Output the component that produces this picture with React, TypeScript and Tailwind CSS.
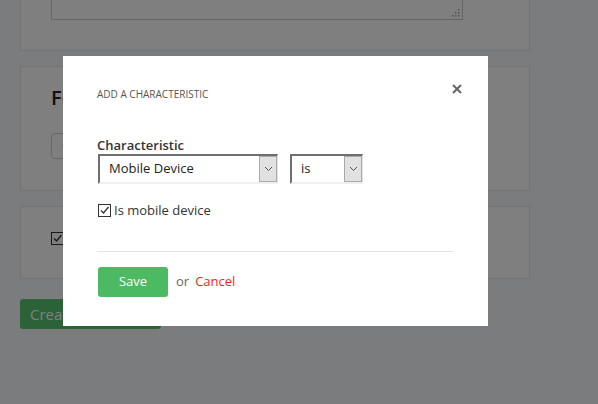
import React from "react"

function ClassicSelect({ value, width }: { value: string; width: string }) {
  return (
    <div
      className={`flex h-[30px] ${width} items-stretch border-t-2 border-l-2 border-r border-b-2 border-t-[#6f6f6f] border-l-[#6f6f6f] border-r-[#e3e3e3] border-b-[#f0f0f0] bg-white`}
    >
      <span className="flex flex-1 items-center pl-[9px] text-[13px] text-[#222]">{value}</span>
      <span className="flex w-[18px] items-center justify-center border border-[#a9a9a9] bg-[#e1e1e1]">
        <svg width="9" height="6" viewBox="0 0 9 6" fill="none">
          <path d="M1 1l3.5 3.5L8 1" stroke="#555" strokeWidth="1" />
        </svg>
      </span>
    </div>
  )
}

function CheckBox() {
  return (
    <span className="flex h-[13px] w-[13px] shrink-0 items-center justify-center border border-[#333] bg-white">
      <svg width="11" height="11" viewBox="0 0 11 11" fill="none">
        <path d="M2 5.5l2.5 2.5L9.5 2" stroke="#333" strokeWidth="1.3" />
      </svg>
    </span>
  )
}

export default function App() {
  return (
    <div
      className="relative h-[404px] w-[598px] overflow-hidden bg-[#f7f9fb]"
      style={{ fontFamily: '"Open Sans", "Liberation Sans", sans-serif' }}
    >
      {/* page behind the dialog */}
      <div className="flex flex-col gap-[15px] px-[20px]">
        <div className="mt-[-61px] w-[510px] border border-[#e6e6e6] bg-white px-[30px] pb-[30px] pt-[20px]">
          <div className="relative h-[60px] w-[412px] border border-[#ccc] bg-white">
            <svg className="absolute bottom-[2px] right-[2px]" width="8" height="8" viewBox="0 0 8 8">
              <rect x="6" y="0" width="1.5" height="1.5" fill="#aaa" />
              <rect x="3" y="3" width="1.5" height="1.5" fill="#aaa" />
              <rect x="6" y="3" width="1.5" height="1.5" fill="#aaa" />
              <rect x="0" y="6" width="1.5" height="1.5" fill="#aaa" />
              <rect x="3" y="6" width="1.5" height="1.5" fill="#aaa" />
              <rect x="6" y="6" width="1.5" height="1.5" fill="#aaa" />
            </svg>
          </div>
        </div>

        <div className="h-[125px] w-[510px] border border-[#e6e6e6] bg-white px-[30px] pt-[18px]">
          <h2 className="text-[20px] font-semibold leading-[26px] text-[#222]">Fonts</h2>
          <div className="mt-[22px] flex h-[26px] w-[120px] items-center rounded border border-[#ccc] bg-white px-[10px] text-[13px] text-[#e67e22]">
            + Add
          </div>
        </div>

        <div className="flex h-[73px] w-[510px] items-start border border-[#e6e6e6] bg-white px-[30px] pt-[25px]">
          <CheckBox />
          <span className="ml-[4px] text-[13px] leading-[14px] text-[#333]">On</span>
        </div>

        <button className="mt-[5px] h-[30px] w-[141px] rounded-[3px] bg-[#58c46e] pl-[10px] text-left text-[15px] text-white">
          Create Segment
        </button>
      </div>

      {/* overlay */}
      <div className="absolute inset-0 bg-black/50" />

      {/* dialog */}
      <div className="absolute left-[63px] top-[56px] flex h-[270px] w-[425px] flex-col bg-white pl-[34px] pr-[35px] pt-[31px]">
        <div className="flex items-start justify-between">
          <h3 className="text-[10px] uppercase leading-[14px] text-[#555]">Add a characteristic</h3>
          <button className="mr-[-9px] mt-[-3px]">
            <svg width="10" height="10" viewBox="0 0 10 10">
              <path d="M1 1l8 8M9 1l-8 8" stroke="#666" strokeWidth="2" />
            </svg>
          </button>
        </div>

        <label className="mt-[35px] text-[13px] font-semibold leading-[18px] text-[#333]">
          Characteristic
        </label>
        <div className="ml-[1px] flex gap-[12px]">
          <ClassicSelect value="Mobile Device" width="w-[180px]" />
          <ClassicSelect value="is" width="w-[73px]" />
        </div>

        <div className="ml-[1px] mt-[17px] flex h-[18px] items-center">
          <CheckBox />
          <span className="ml-[3px] text-[13px] leading-[18px] text-[#333]">Is mobile device</span>
        </div>

        <hr className="mt-[32px] border-t border-[#e5e5e5]" />

        <div className="ml-[1px] mt-[15px] flex items-center">
          <button className="h-[30px] w-[70px] rounded-[3px] bg-[#4cba63] text-[13px] text-white">
            Save
          </button>
          <span className="ml-[8px] text-[13px] text-[#666]">or</span>
          <a className="ml-[6px] text-[13px] text-[#ff1a1a]">Cancel</a>
        </div>
      </div>
    </div>
  )
}
